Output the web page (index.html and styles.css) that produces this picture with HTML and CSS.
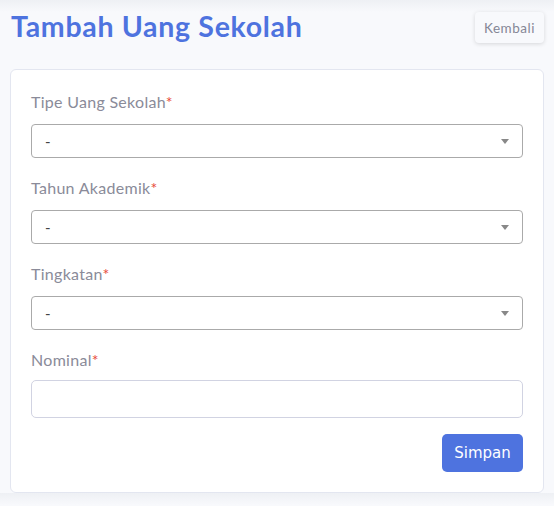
FILE: index.html
```html
<!DOCTYPE html>
<html lang="id">
<head>
<meta charset="utf-8">
<title>Tambah Uang Sekolah</title>
<link rel="stylesheet" href="styles.css">
</head>
<body>
<div class="page">
  <div class="header">
    <h1 class="title">Tambah Uang Sekolah</h1>
    <button class="btn-back" type="button">Kembali</button>
  </div>
  <div class="card">
    <div class="group">
      <label class="label">Tipe Uang Sekolah<span class="req">*</span></label>
      <div class="select"><span class="select-text">-</span><span class="arrow"></span></div>
    </div>
    <div class="group">
      <label class="label">Tahun Akademik<span class="req">*</span></label>
      <div class="select"><span class="select-text">-</span><span class="arrow"></span></div>
    </div>
    <div class="group">
      <label class="label">Tingkatan<span class="req">*</span></label>
      <div class="select"><span class="select-text">-</span><span class="arrow"></span></div>
    </div>
    <div class="group group-input">
      <label class="label">Nominal<span class="req">*</span></label>
      <input class="input" type="text">
    </div>
    <div class="actions">
      <button class="btn-save" type="button">Simpan</button>
    </div>
  </div>
</div>
</body>
</html>
```

FILE: styles.css
```css
html, body {
  margin: 0;
  padding: 0;
}
body {
  background: linear-gradient(#eef0f4 0, #f8f9fc 12px) #f8f9fc;
  font-family: "Lato", "Noto Sans", sans-serif;
  color: #858796;
}
.page {
  padding: 0 10px;
}
.header {
  height: 69px;
  display: flex;
  justify-content: space-between;
  align-items: flex-start;
}
.title {
  margin: 9px 0 0 1px;
  font-size: 28.5px;
  line-height: 34px;
  font-weight: 700;
  letter-spacing: 0.7px;
  color: #4e73df;
}
.btn-back {
  margin-top: 12px;
  width: 69px;
  height: 31px;
  border: none;
  border-radius: 4px;
  background: #f8f9fc;
  box-shadow: 0 1px 4px rgba(0, 0, 0, 0.14);
  font-family: "Lato", "Noto Sans", sans-serif;
  font-size: 13.5px;
  letter-spacing: 0.5px;
  color: #858796;
  padding: 0;
}
.card {
  background: #fff;
  border: 1px solid #e3e6f0;
  border-radius: 6px;
  padding: 20px;
}
.group {
  margin-bottom: 18px;
}
.label {
  display: block;
  height: 24px;
  line-height: 24px;
  font-size: 16px;
  letter-spacing: 0.3px;
  margin-bottom: 10px;
  color: #8a8b99;
}
.req {
  color: #e74a3b;
}
.select {
  box-sizing: border-box;
  height: 34px;
  border: 1px solid #aaa;
  border-radius: 4px;
  display: flex;
  align-items: center;
  justify-content: space-between;
  padding: 0 13px 0 13px;
}
.select-text {
  color: #444;
  font-size: 15px;
}
.arrow {
  width: 0;
  height: 0;
  border-style: solid;
  border-width: 5px 4px 0 4px;
  border-color: #888 transparent transparent transparent;
}
.group-input {
  margin-bottom: 16px;
}
.group-input .label {
  margin-bottom: 8px;
}
.input {
  display: block;
  box-sizing: border-box;
  width: 100%;
  height: 38px;
  border: 1px solid #d1d3e2;
  border-radius: 5px;
  margin: 0;
}
.actions {
  display: flex;
  justify-content: flex-end;
}
.btn-save {
  width: 81px;
  height: 38px;
  border: none;
  border-radius: 5px;
  background: #4e73df;
  color: #fff;
  font-family: "DejaVu Sans", sans-serif;
  font-size: 15px;
  padding: 0;
}
```
